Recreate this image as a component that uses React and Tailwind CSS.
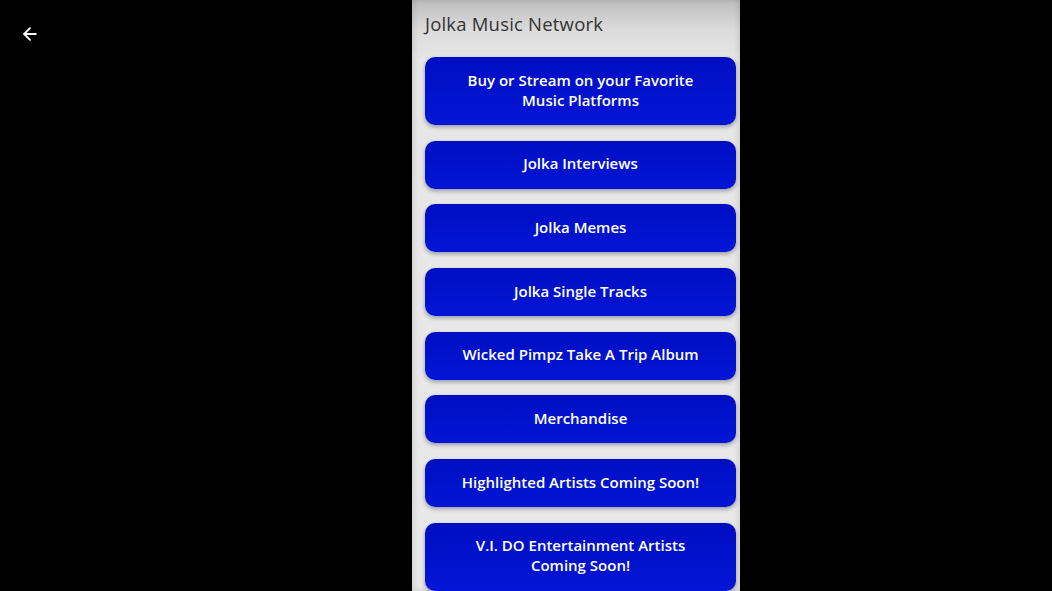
import { ArrowLeft } from 'lucide-react';

const LINKS = [
	[ 'Buy or Stream on your Favorite', 'Music Platforms' ],
	[ 'Jolka Interviews' ],
	[ 'Jolka Memes' ],
	[ 'Jolka Single Tracks' ],
	[ 'Wicked Pimpz Take A Trip Album' ],
	[ 'Merchandise' ],
	[ 'Highlighted Artists Coming Soon!' ],
	[ 'V.I. DO Entertainment Artists', 'Coming Soon!' ],
];

export default function App() {
	return (
		<div className="relative flex w-[1052px] h-[591px] overflow-hidden bg-black font-['Open_Sans',sans-serif]">
			<button type="button" className="absolute left-[20px] top-[24px] text-white">
				<ArrowLeft className="size-5" strokeWidth={ 2.2 } />
			</button>

			{ /* Phone screen */ }
			<div className="w-[328px] h-full ml-[412px] flex flex-col bg-[linear-gradient(to_bottom,#bdbdbd_0px,#dcdcdc_30px,#e6e6e6_60px,#e9e9e9_100%)] shadow-[inset_3px_0_4px_rgba(0,0,0,0.08),inset_-3px_0_4px_rgba(0,0,0,0.08)]">
				<h1 className="pl-[13px] pt-[10px] h-[57px] text-[18.5px] font-normal text-[#333] tracking-[0.2px]">
					Jolka Music Network
				</h1>

				<div className="flex flex-col gap-[15.7px] pl-[13px] pr-[4px]">
					{ LINKS.map( ( lines ) => (
						<button
							key={ lines[ 0 ] }
							type="button"
							className={ `flex flex-col items-center justify-center w-full pb-[3px] rounded-[10px] bg-[linear-gradient(to_bottom,#000ec2,#0316d6)] text-white font-semibold text-[15px] leading-[20px] shadow-[0_2px_4px_rgba(0,0,40,0.35)] ${
								lines.length > 1 ? 'h-[68px] shrink-0' : 'h-[48px] shrink-0'
							}` }
						>
							{ lines.map( ( l ) => (
								<span key={ l }>{ l }</span>
							) ) }
						</button>
					) ) }
				</div>
			</div>
		</div>
	);
}
